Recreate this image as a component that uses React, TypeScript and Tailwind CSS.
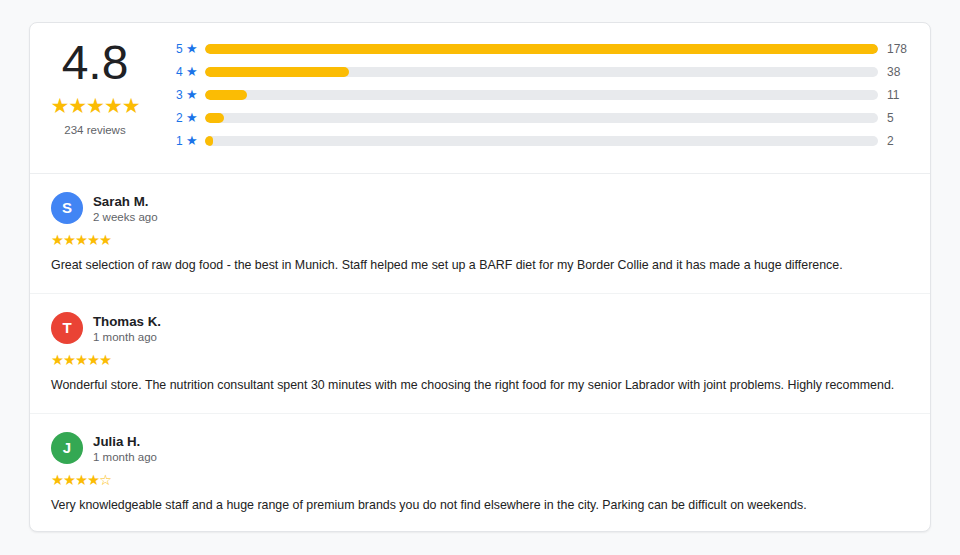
type Review = { name: string; initial: string; color: string; when: string; stars: number; text: string };

const dist = [
  { star: 5, count: 178 },
  { star: 4, count: 38 },
  { star: 3, count: 11 },
  { star: 2, count: 5 },
  { star: 1, count: 2 },
];

const reviews: Review[] = [
  {
    name: "Sarah M.",
    initial: "S",
    color: "bg-[#4285f4]",
    when: "2 weeks ago",
    stars: 5,
    text: "Great selection of raw dog food - the best in Munich. Staff helped me set up a BARF diet for my Border Collie and it has made a huge difference.",
  },
  {
    name: "Thomas K.",
    initial: "T",
    color: "bg-[#ea4335]",
    when: "1 month ago",
    stars: 5,
    text: "Wonderful store. The nutrition consultant spent 30 minutes with me choosing the right food for my senior Labrador with joint problems. Highly recommend.",
  },
  {
    name: "Julia H.",
    initial: "J",
    color: "bg-[#34a853]",
    when: "1 month ago",
    stars: 4,
    text: "Very knowledgeable staff and a huge range of premium brands you do not find elsewhere in the city. Parking can be difficult on weekends.",
  },
];

const max = 178;

export default function App() {
  return (
    <div className="min-h-[555px] bg-[#f8f9fa] px-[29px] pt-[22px] font-['Liberation_Sans',Arial,sans-serif] text-[#202124]">
      <div className="h-[510px] overflow-hidden rounded-lg border border-[#e3e5e8] bg-white shadow-[0_1px_2px_rgba(0,0,0,0.06)]">
        <div className="flex border-b border-[#eceef0] pb-[21px] pl-[21px] pr-[22px] pt-[14px]">
          <div className="flex w-[88px] flex-col items-center pt-[2px]">
            <div className="text-[48px] leading-[48px]">4.8</div>
            <div className="mt-[7px] font-['DejaVu_Sans',sans-serif] text-[21px] leading-[24px] tracking-[-1px] text-[#fbbc04]">★★★★★</div>
            <div className="mt-[4px] text-[11.5px] leading-[16px] text-[#5f6368]">234 reviews</div>
          </div>
          <div className="ml-[37px] flex-1">
            {dist.map((d) => (
              <div key={d.star} className="flex h-[23px] items-center">
                <div className="w-[29px] text-[12px] text-[#1a73e8]">
                  {d.star} <span className="font-['DejaVu_Sans',sans-serif] text-[13px]">★</span>
                </div>
                <div className="h-[10px] flex-1 overflow-hidden rounded-full bg-[#e8eaed]">
                  <div className="h-full rounded-full bg-[#fbbc04]" style={{ width: `${(d.count / max) * 100}%` }} />
                </div>
                <div className="w-[30px] pl-[9px] text-[12px] text-[#5f6368]">{d.count}</div>
              </div>
            ))}
          </div>
        </div>
        {reviews.map((r, i) => (
          <div key={r.name} className={`pb-[18px] pl-[21px] pr-[22px] pt-[18px] ${i < reviews.length - 1 ? "border-b border-[#f1f3f4]" : ""}`}>
            <div className="flex items-center gap-[10px]">
              <div className={`flex h-[32px] w-[32px] items-center justify-center rounded-full text-[15px] font-bold text-white ${r.color}`}>
                {r.initial}
              </div>
              <div>
                <div className="text-[13.3px] font-bold leading-[17px]">{r.name}</div>
                <div className="text-[11.5px] leading-[14px] text-[#5f6368]">{r.when}</div>
              </div>
            </div>
            <div className="mt-[7px] font-['DejaVu_Sans',sans-serif] text-[14.5px] leading-[18px] tracking-[-1px] text-[#fbbc04]">
              {"★".repeat(r.stars)}
              {"☆".repeat(5 - r.stars)}
            </div>
            <p className="mt-[7px] text-[12.4px] leading-[19px] text-[#222]">{r.text}</p>
          </div>
        ))}
      </div>
    </div>
  );
}
